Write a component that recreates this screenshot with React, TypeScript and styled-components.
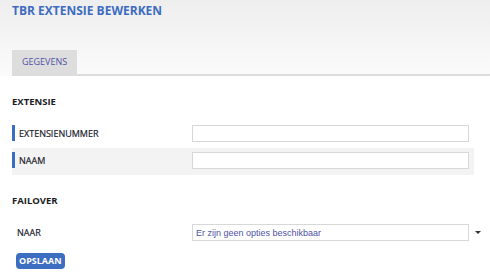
import React from 'react';
import styled, { createGlobalStyle } from 'styled-components';

const GlobalStyle = createGlobalStyle`
  body {
    margin     : 0;
    background : #ffffff;
    font-family: 'Open Sans', 'Liberation Sans', sans-serif;
  }
`;

const Header = styled.header`
  background : linear-gradient(#eeeeee, #fbfbfb);
  padding    : 3px 0 0 12px;
`;

const Title = styled.h1`
  margin     : 0;
  font-size  : 12px;
  line-height: 16px;
  font-weight: 700;
  color      : #3d6cc0;
`;

const TabBar = styled.div`
  display      : flex;
  margin-top   : 31px;
  border-bottom: 2px solid #dcdcdc;
`;

const Tab = styled.div`
  height     : 24px;
  padding    : 0 10px;
  background : #dddddd;
  font-size  : 9px;
  line-height: 24px;
  color      : #4f52a6;
`;

const Content = styled.main`
  padding: 0 16px 0 12px;
`;

const SectionTitle = styled.h2`
  margin     : 19px 0 12px;
  font-size  : 9.5px;
  line-height: 14px;
  font-weight: 700;
  color      : #1c1c24;
`;

const Row = styled.div<{ $shaded?: boolean }>`
  display              : grid;
  grid-template-columns: 180px 277px auto;
  align-items          : start;
  padding              : 4px 0 6px;
  background           : ${p => (p.$shaded ? '#f3f3f3' : 'transparent')};
`;

const Label = styled.label<{ $marker?: boolean }>`
  height      : 16px;
  padding-left: ${p => (p.$marker ? '4px' : '5px')};
  border-left : ${p => (p.$marker ? '3px solid #3a6cc0' : 'none')};
  font-size   : 9px;
  line-height : 17px;
  color       : #1c1c2c;
  -webkit-text-stroke: 0.2px #1c1c2c;
`;

const TextInput = styled.input`
  box-sizing: border-box;
  width     : 277px;
  height    : 17px;
  margin    : 0;
  border    : 1px solid #d8d8d8;
  background: #ffffff;
  outline   : none;
`;

const Select = styled.select`
  box-sizing   : border-box;
  width        : 277px;
  height       : 17px;
  margin       : 0;
  padding      : 0 3px;
  border       : 1px solid #d8d8d8;
  border-radius: 0;
  background   : #ffffff;
  appearance   : none;
  font-family  : 'Liberation Sans', Arial, sans-serif;
  font-size    : 9px;
  color        : #4f52a6;
  outline      : none;
`;

const Caret = styled.span`
  align-self  : center;
  width       : 0;
  height      : 0;
  margin-left : 6px;
  border-left : 3px solid transparent;
  border-right: 3px solid transparent;
  border-top  : 3px solid #333333;
`;

const SaveButton = styled.button`
  margin       : 2px 0 0 4px;
  height       : 16px;
  padding      : 0 3px;
  border       : none;
  border-radius: 4px;
  background   : #3d6dc1;
  color        : #ffffff;
  font-family  : 'Open Sans', sans-serif;
  font-size    : 9px;
  font-weight  : 700;
  line-height  : 16px;
`;

const App = () => {
  return (
    <>
      <GlobalStyle />
      <Header>
        <Title>TBR EXTENSIE BEWERKEN</Title>
        <TabBar>
          <Tab>GEGEVENS</Tab>
        </TabBar>
      </Header>
      <Content>
        <SectionTitle>EXTENSIE</SectionTitle>
        <Row>
          <Label $marker>EXTENSIENUMMER</Label>
          <TextInput />
        </Row>
        <Row $shaded>
          <Label $marker>NAAM</Label>
          <TextInput />
        </Row>
        <SectionTitle>FAILOVER</SectionTitle>
        <Row>
          <Label>NAAR</Label>
          <Select>
            <option>Er zijn geen opties beschikbaar</option>
          </Select>
          <Caret />
        </Row>
        <SaveButton>OPSLAAN</SaveButton>
      </Content>
    </>
  );
};

export default App;
